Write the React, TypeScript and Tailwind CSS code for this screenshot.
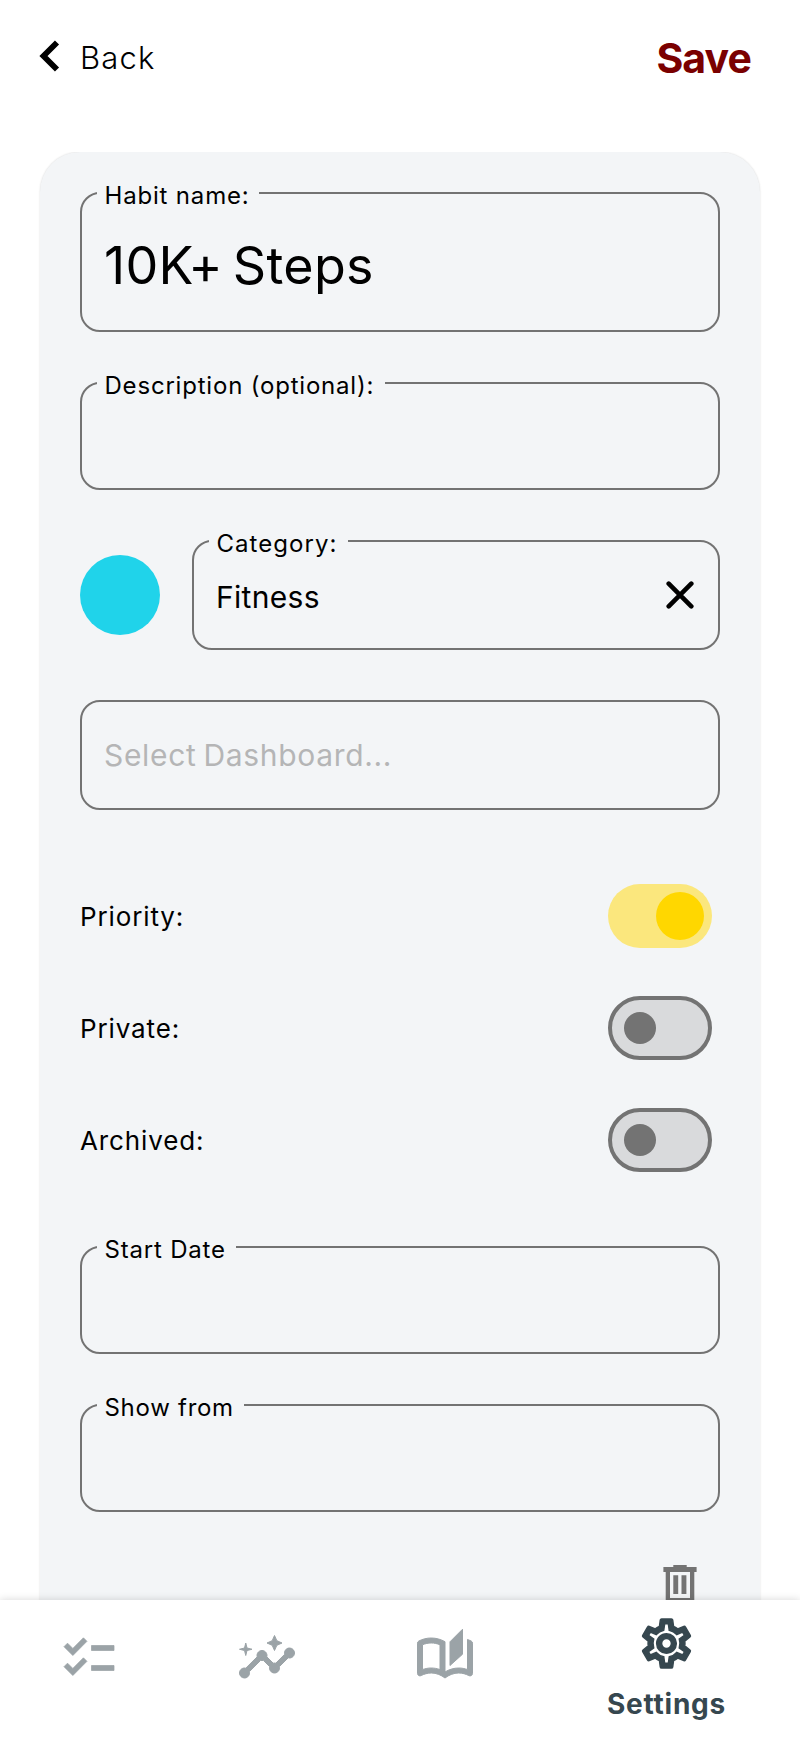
import { ReactNode } from "react";
import { MdChecklist, MdInsights, MdOutlineAutoStories } from "react-icons/md";

function Field({ label, labelClass, className, children }: { label?: string; labelClass?: string; className: string; children?: ReactNode }) {
  return (
    <div className={`relative flex items-center rounded-[20px] border-2 border-[#737373] ${className}`}>
      {label && (
        <span className={`absolute -top-[15px] left-[15px] h-[34px] bg-[#f3f5f7] pl-[7.5px] text-[24px] leading-[34px] whitespace-nowrap ${labelClass}`}>
          {label}
        </span>
      )}
      {children}
    </div>
  );
}

function Toggle({ on }: { on?: boolean }) {
  return on ? (
    <span className="flex h-16 w-[104px] items-center justify-end rounded-full bg-[#fbe77d] pr-2">
      <span className="size-12 rounded-full bg-[#ffd700]" />
    </span>
  ) : (
    <span className="flex h-16 w-[104px] items-center rounded-full border-4 border-[#737373] bg-[#d9dadc] pl-3">
      <span className="size-8 rounded-full bg-[#737373]" />
    </span>
  );
}

function SettingRow({ label, on }: { label: string; on?: boolean }) {
  return (
    <div className="flex h-16 items-center justify-between pr-2">
      <span className="pt-[2px] text-[26px] leading-8 tracking-[0.87px]">{label}</span>
      <Toggle on={on} />
    </div>
  );
}

export default function App() {
  return (
    <div className="flex h-[1744px] w-[800px] flex-col overflow-hidden bg-white font-['Inter',sans-serif] text-black">
      <header className="flex h-[152px] shrink-0 items-start justify-between pt-[32px] pr-[49px] pl-[39px]">
        <div className="flex items-center">
          <svg className="mt-[-4px] h-[32px] w-[22px]" viewBox="0 0 22 32" fill="none" stroke="currentColor" strokeWidth="5.8">
            <path d="M18 2.5 4.5 16 18 29.5" />
          </svg>
          <span className="ml-[19px] text-[31px] leading-[52px] font-light tracking-[1.2px]">Back</span>
        </div>
        <span className="text-[41px] leading-[52px] font-bold tracking-[-0.9px] text-[#7a0000]">Save</span>
      </header>

      <main className="min-h-0 flex-1 overflow-hidden px-10">
        <div className="flex h-[1600px] flex-col rounded-[40px] bg-[#f3f5f7] px-10 pt-10 shadow-[0_0_2px_rgba(0,0,0,0.16)]">
          <Field label="Habit name:" labelClass="w-[162px] tracking-[0.82px]" className="h-[140px] shrink-0 pl-[22px]">
            <span className="mt-[7px] text-[52px] leading-[60px] tracking-[0.3px] [word-spacing:-5px]">10K+ Steps</span>
          </Field>
          <Field label="Description (optional):" labelClass="w-[288px] tracking-[0.8px]" className="mt-[50px] h-[108px] shrink-0" />
          <div className="mt-[50px] flex h-[110px] shrink-0 items-center gap-8">
            <span className="size-20 shrink-0 rounded-full bg-[#20d3ea]" />
            <Field label="Category:" labelClass="w-[139px] tracking-[1.05px]" className="h-[110px] flex-1 justify-between pr-[24px] pl-[22px]">
              <span className="mt-1 text-[30px] leading-9 tracking-[0.3px]">Fitness</span>
              <svg className="size-[28px]" viewBox="0 0 28 28" fill="none" stroke="currentColor" strokeWidth="4.6" strokeLinecap="round">
                <path d="m2.7 2.7 22.6 22.6M25.3 2.7 2.7 25.3" />
              </svg>
            </Field>
          </div>
          <Field className="mt-[50px] h-[110px] shrink-0 pl-[22px]">
            <span className="text-[30px] leading-9 tracking-[0.66px] text-[#b5b5b6] [word-spacing:-2px]">Select Dashboard...</span>
          </Field>
          <div className="mt-[74px] flex shrink-0 flex-col gap-12">
            <SettingRow label="Priority:" on />
            <SettingRow label="Private:" />
            <SettingRow label="Archived:" />
          </div>
          <Field label="Start Date" labelClass="w-[139px] tracking-[0.8px]" className="mt-[74px] h-[108px] shrink-0" />
          <Field label="Show from" labelClass="w-[147px] tracking-[0.72px]" className="mt-[50px] h-[108px] shrink-0" />
          <div className="mt-[53px] flex justify-end pr-[23px]">
            <svg className="h-[42px] w-[34px] text-[#737373]" viewBox="0 0 34 42" fill="currentColor">
              <path fillRule="evenodd" d="M.4 2H10.3V0H23.7V2H33.6V7H31.3V38H2.7V7H.4zM7 7V33H27V7z" />
              <path d="M10.3 10.3H15.2V29H10.3zM18.5 10.3H23.4V29H18.5z" />
            </svg>
          </div>
        </div>
      </main>

      <nav className="relative flex h-[144px] shrink-0 bg-white text-[#9ba3a7] shadow-[0_0_8px_rgba(0,0,0,0.16)] [&_[fill=none]]:stroke-none">
        <div className="flex w-[178px] justify-center pt-[28px]"><MdChecklist size={60} stroke="currentColor" strokeWidth={0.3} /></div>
        <div className="flex w-[178px] justify-center pt-[28px]"><MdInsights size={60} stroke="currentColor" strokeWidth={0.4} /></div>
        <div className="flex w-[177px] justify-center pt-[28px]"><MdOutlineAutoStories size={60} stroke="currentColor" strokeWidth={0.4} /></div>
        <div className="flex w-[267px] flex-col items-center pt-[14px] text-[#36474f]">
          <svg className="size-[59px]" viewBox="0 0 24 24" fill="currentColor" stroke="currentColor" strokeWidth="0.6">
            <path d="M12,8A4,4 0 0,1 16,12A4,4 0 0,1 12,16A4,4 0 0,1 8,12A4,4 0 0,1 12,8M12,10A2,2 0 0,0 10,12A2,2 0 0,0 12,14A2,2 0 0,0 14,12A2,2 0 0,0 12,10M10,22C9.75,22 9.54,21.82 9.5,21.58L9.13,18.93C8.5,18.68 7.96,18.34 7.44,17.94L4.95,18.95C4.73,19.03 4.46,18.95 4.34,18.73L2.34,15.27C2.21,15.05 2.27,14.78 2.46,14.63L4.57,12.97L4.5,12L4.57,11L2.46,9.37C2.27,9.22 2.21,8.95 2.34,8.73L4.34,5.27C4.46,5.05 4.73,4.96 4.95,5.05L7.44,6.05C7.96,5.66 8.5,5.32 9.13,5.07L9.5,2.42C9.54,2.18 9.75,2 10,2H14C14.25,2 14.46,2.18 14.5,2.42L14.87,5.07C15.5,5.32 16.04,5.66 16.56,6.05L19.05,5.05C19.27,4.96 19.54,5.05 19.66,5.27L21.66,8.73C21.79,8.95 21.73,9.22 21.54,9.37L19.43,11L19.5,12L19.43,13L21.54,14.63C21.73,14.78 21.79,15.05 21.66,15.27L19.66,18.73C19.54,18.95 19.27,19.04 19.05,18.95L16.56,17.95C16.04,18.34 15.5,18.68 14.87,18.93L14.5,21.58C14.46,21.82 14.25,22 14,22H10M11.25,4L10.88,6.61C9.68,6.86 8.62,7.5 7.85,8.39L5.44,7.35L4.69,8.65L6.8,10.2C6.4,11.37 6.4,12.64 6.8,13.8L4.68,15.36L5.43,16.66L7.86,15.62C8.63,16.5 9.68,17.14 10.87,17.38L11.24,20H12.76L13.13,17.39C14.32,17.14 15.37,16.5 16.14,15.62L18.57,16.66L19.32,15.36L17.2,13.81C17.6,12.64 17.6,11.37 17.2,10.2L19.31,8.65L18.56,7.35L16.15,8.39C15.38,7.5 14.32,6.86 13.12,6.62L12.75,4H11.25Z" />
          </svg>
          <span className="mt-[13px] text-[28px] leading-9 font-bold tracking-[0.75px]">Settings</span>
        </div>
      </nav>
    </div>
  );
}
